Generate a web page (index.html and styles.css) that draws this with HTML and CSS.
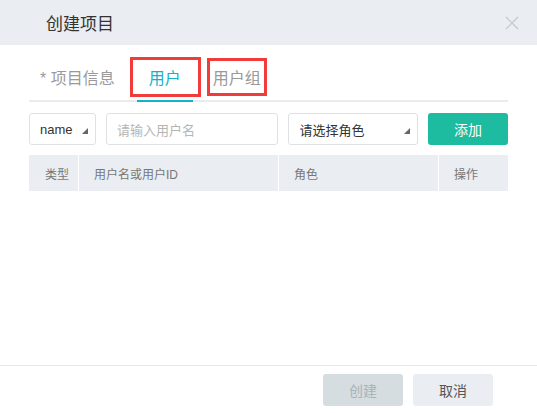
FILE: index.html
```html
<!DOCTYPE html>
<html lang="zh-CN">
<head>
<meta charset="utf-8">
<title>创建项目</title>
<link rel="stylesheet" href="styles.css">
</head>
<body>
<div class="dialog">
  <header class="dialog-header">
    <h1 class="dialog-title">创建项目</h1>
    <span class="close" aria-label="关闭">
      <svg width="14" height="14" viewBox="0 0 14 14"><path d="M1 1 L13 13 M13 1 L1 13" stroke="#c3c7cc" stroke-width="1.2" fill="none"/></svg>
    </span>
  </header>
  <main class="dialog-body">
    <nav class="tabs">
      <div class="tab tab-first">* 项目信息</div>
      <div class="tab active">用户<span class="mark mark-a"></span></div>
      <div class="tab">用户组<span class="mark mark-b"></span></div>
    </nav>
    <div class="toolbar">
      <div class="select select-name"><span>name</span><i class="caret"></i></div>
      <div class="input">请输入用户名</div>
      <div class="select select-role"><span>请选择角色</span><i class="caret"></i></div>
      <button class="btn-add">添加</button>
    </div>
    <div class="table-head">
      <div class="th th-type">类型</div>
      <div class="th th-user">用户名或用户ID</div>
      <div class="th th-role">角色</div>
      <div class="th th-op">操作</div>
    </div>
  </main>
  <footer class="dialog-footer">
    <button class="btn btn-create">创建</button>
    <button class="btn btn-cancel">取消</button>
  </footer>
</div>
</body>
</html>
```
FILE: styles.css
```css
* { box-sizing: border-box; }
html, body { margin: 0; padding: 0; background: #fff; }
body {
  font-family: "Liberation Sans", "Noto Sans CJK SC", sans-serif;
  color: #333;
}
.dialog {
  height: 413px;
  display: flex;
  flex-direction: column;
}
.dialog-header {
  height: 45px;
  background: #eaedf1;
  display: flex;
  align-items: center;
  justify-content: space-between;
  padding: 0 18px 0 46px;
}
.dialog-title {
  margin: 0;
  font-size: 17px;
  font-weight: normal;
  color: #333;
}
.close { display: flex; }
.dialog-body {
  flex: 1;
  padding: 0 29px;
}
.tabs {
  margin-top: 12px;
  display: flex;
  border-bottom: 2px solid #e9ecef;
}
.tab {
  position: relative;
  height: 45px;
  line-height: 43px;
  padding: 0 12px;
  margin-bottom: -2px;
  border-bottom: 2px solid transparent;
  font-size: 16px;
  color: #9a9a9a;
  margin-right: 8px;
}
.tab-first { padding-left: 11px; margin-right: 10px; }
.tab.active {
  color: #12b2cb;
  border-bottom-color: #12b2cb;
}
.mark {
  position: absolute;
  border: 3px solid #f23c3c;
}
.mark-a { left: -7px; right: -8px; top: 0; height: 40px; }
.mark-b { left: 6px; right: 6px; top: 1px; height: 38px; }
.toolbar {
  margin-top: 11px;
  display: flex;
  height: 32px;
}
.select, .input {
  border: 1px solid #dfe1e4;
  border-radius: 3px;
  height: 32px;
  display: flex;
  align-items: center;
  padding: 0 7px 0 10px;
  font-size: 13px;
}
.select { justify-content: space-between; color: #333; }
.select-name { width: 67px; }
.input { width: 173px; margin-left: 10px; color: #b5b5b5; }
.select-role { width: 130px; margin-left: 10px; }
.caret {
  width: 0; height: 0;
  border-left: 6px solid transparent;
  border-bottom: 6px solid #666;
  margin-top: 4px;
}
.btn-add {
  margin-left: 10px;
  width: 80px;
  height: 32px;
  border: none;
  border-radius: 3px;
  background: #1dbba0;
  color: #fff;
  font-family: inherit;
  font-size: 14px;
}
.table-head {
  margin-top: 10px;
  display: flex;
  height: 36px;
  background: #eaedf1;
}
.th {
  display: flex;
  align-items: center;
  padding-left: 15px;
  font-size: 12px;
  color: #777;
  border-left: 1px solid #fff;
}
.th-type { width: 49px; border-left: none; padding-left: 16px; }
.th-user { width: 200px; }
.th-role { width: 160px; }
.th-op { flex: 1; }
.dialog-footer {
  border-top: 1px solid #e8e8e8;
  padding: 8px 44px 7px 0;
  display: flex;
  justify-content: flex-end;
  gap: 10px;
}
.btn {
  width: 80px;
  height: 32px;
  border: none;
  border-radius: 3px;
  font-family: inherit;
  font-size: 14px;
}
.btn-create { background: #d5dde1; color: #a9b1b6; }
.btn-cancel { background: #eaedf1; color: #555; }
```
